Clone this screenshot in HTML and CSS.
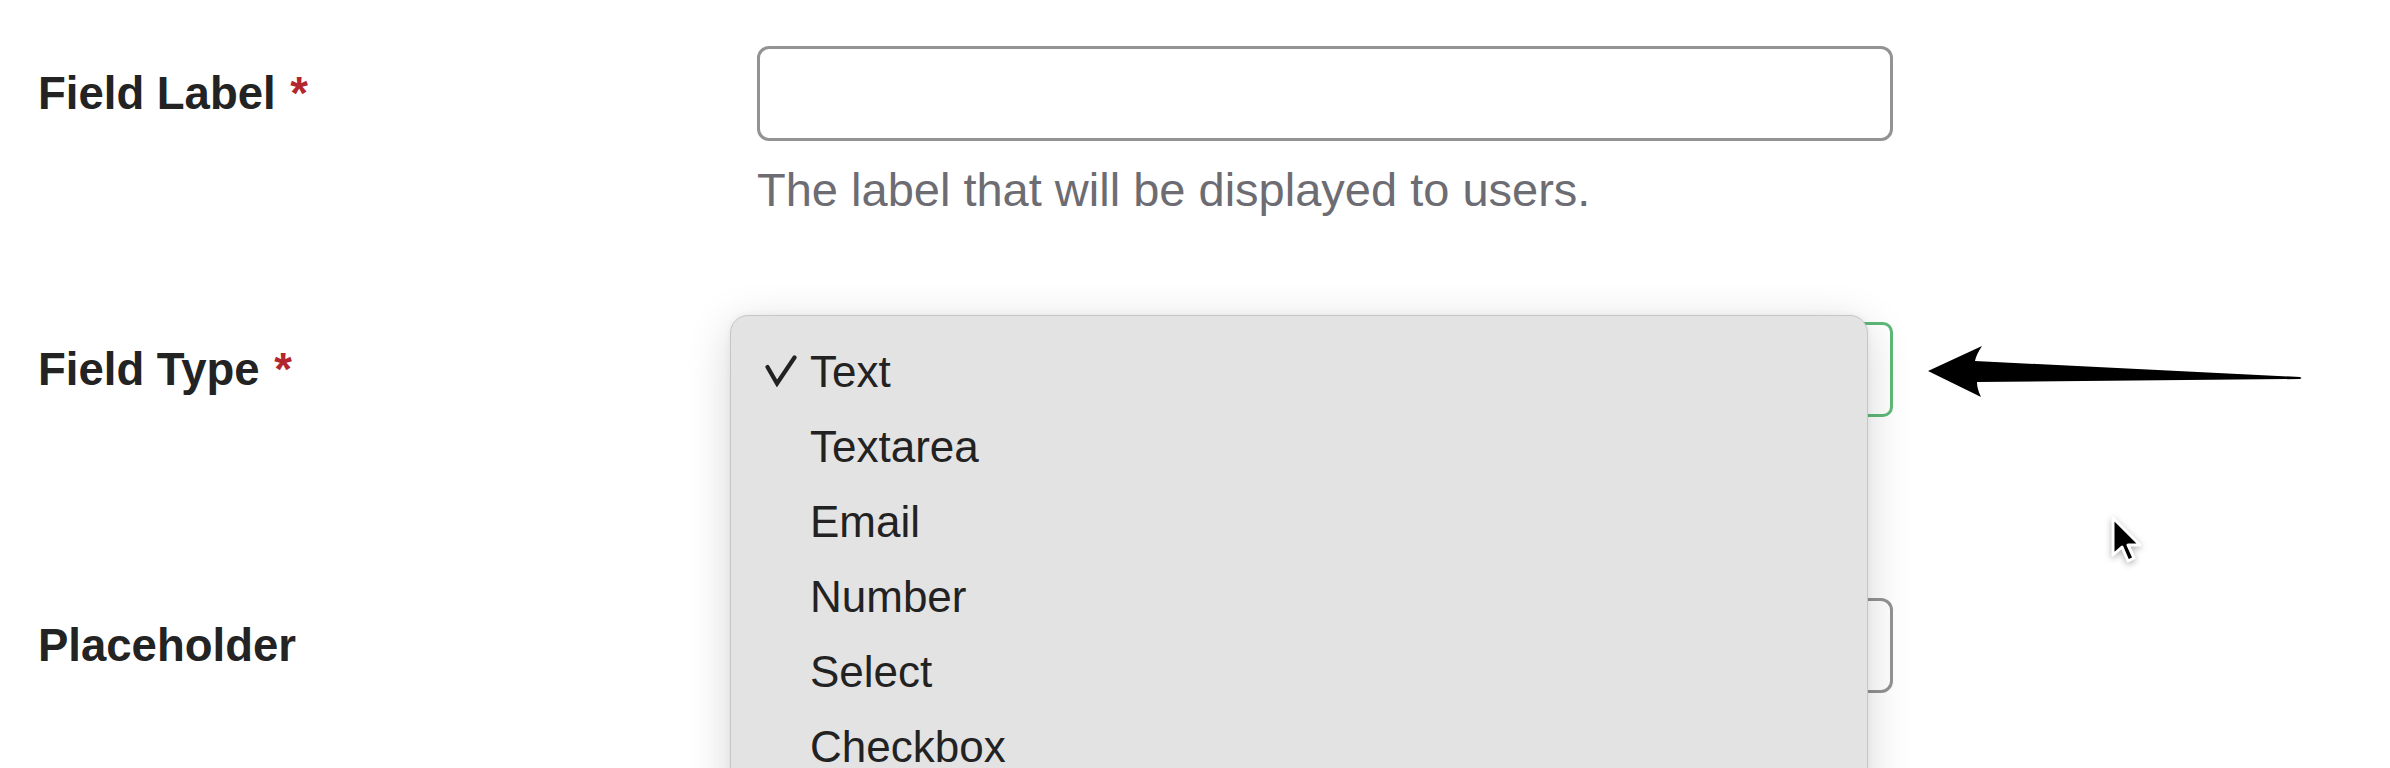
FILE: index.html
```html
<!DOCTYPE html>
<html lang="en">
<head>
<meta charset="utf-8">
<title>Field settings</title>
<link rel="stylesheet" href="styles.css">
</head>
<body>
<div class="form">
  <div class="row">
    <label class="label">Field Label <span class="req">*</span></label>
    <div class="field">
      <input class="control" type="text">
      <div class="help">The label that will be displayed to users.</div>
    </div>
  </div>
  <div class="row">
    <label class="label">Field Type <span class="req">*</span></label>
    <div class="field">
      <div class="control select"></div>
      <div class="help">&nbsp;</div>
      <div class="menu">
        <div class="item"><span class="check"><svg width="32" height="32" viewBox="0 0 32 32"><polyline points="2.5,12 12,28.5 29.5,2.5" fill="none" stroke="#222" stroke-width="4.2" stroke-linecap="round" stroke-linejoin="miter"/></svg></span>Text</div>
        <div class="item"><span class="check"></span>Textarea</div>
        <div class="item"><span class="check"></span>Email</div>
        <div class="item"><span class="check"></span>Number</div>
        <div class="item"><span class="check"></span>Select</div>
        <div class="item"><span class="check"></span>Checkbox</div>
      </div>
    </div>
  </div>
  <div class="row">
    <label class="label">Placeholder</label>
    <div class="field">
      <input class="control" type="text">
    </div>
  </div>
</div>

<svg class="arrow" width="400" height="70" viewBox="0 0 400 70">
  <path d="M8 35 L62 10 Q56 19 55 25 L380 41 L381.5 42 L380 43 L57 46 Q57 53 61 61 Z" fill="#000"/>
</svg>

<svg class="cursor" width="44" height="60" viewBox="0 0 44 60">
  <path d="M7 7 L7 44 L16 36 L22 50 L28 47 L22 34 L34 34 Z" fill="#000" stroke="#fff" stroke-width="3" stroke-linejoin="round"/>
</svg>
</body>
</html>
```
FILE: styles.css
```css
html, body {
  margin: 0;
  padding: 0;
}
body {
  width: 2390px;
  height: 768px;
  overflow: hidden;
  position: relative;
  background: #ffffff;
  font-family: "Liberation Sans", Arial, Helvetica, sans-serif;
  color: #232323;
}
.form {
  padding: 46px 0 0 38px;
}
.row {
  display: grid;
  grid-template-columns: 719px 1136px;
  margin-bottom: 99px;
}
.label {
  height: 95px;
  display: flex;
  align-items: center;
  font-size: 45.5px;
  font-weight: 700;
  color: #232323;
  white-space: pre;
}
.req {
  color: #b3262e;
  margin-left: 2px;
}
.field {
  position: relative;
}
.control {
  display: block;
  box-sizing: border-box;
  width: 1136px;
  height: 95px;
  margin: 0;
  padding: 0 20px;
  border: 3px solid #939393;
  border-radius: 12px;
  background: #ffffff;
  font: inherit;
  outline: none;
}
.select {
  border-color: #5fb878;
  border-radius: 10px;
}
.help {
  margin-top: 16px;
  font-size: 47px;
  line-height: 66px;
  color: #6c6c72;
}
.menu {
  position: absolute;
  top: -7px;
  left: -27px;
  width: 1138px;
  height: 520px;
  box-sizing: border-box;
  padding-top: 18px;
  background: #e3e3e3;
  border: 1px solid #c6c6c6;
  border-radius: 18px;
  box-shadow: 0 10px 45px rgba(0, 0, 0, 0.16), 0 0 6px rgba(0, 0, 0, 0.06);
  z-index: 2;
}
.item {
  height: 75px;
  line-height: 75px;
  padding-left: 34px;
  font-size: 44px;
  color: #222222;
  white-space: nowrap;
}
.check {
  display: inline-block;
  width: 45px;
  height: 32px;
  vertical-align: baseline;
}
.check svg {
  display: block;
}
.arrow {
  position: absolute;
  left: 1920px;
  top: 336px;
  z-index: 3;
}
.cursor {
  position: absolute;
  left: 2106px;
  top: 511px;
  z-index: 3;
  filter: drop-shadow(0 2px 3px rgba(0, 0, 0, 0.3));
}
```
